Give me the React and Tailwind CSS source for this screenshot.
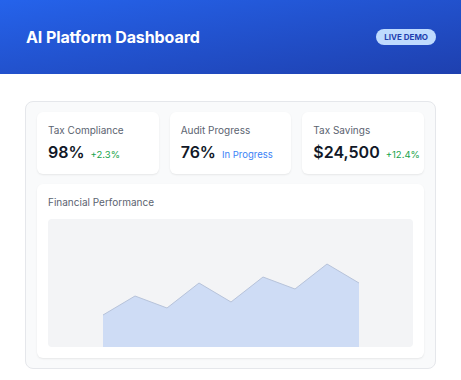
export default function App() {
  const pts = [
    [55, 96], [87, 77], [119, 89], [151, 64], [183, 83], [215, 58], [247, 70], [279, 45], [311, 64],
  ];
  const line = pts.map((p) => p.join(",")).join(" ");
  const poly = `55,128 ${line} 311,128`;
  return (
    <div className="w-[461px] h-[380px] bg-white" style={{ fontFamily: "Inter, 'Noto Sans', sans-serif" }}>
      <div className="h-[74px] bg-gradient-to-br from-[#2563eb] to-[#1e40af] flex items-center justify-between pl-[26px] pr-[25px]">
        <h1 className="text-white font-bold text-[16px] tracking-[-0.1px]">AI Platform Dashboard</h1>
        <span className="bg-[#bfdbfe] text-[#1e40af] text-[8px] font-bold rounded-full px-[8px] h-[16px] flex items-center leading-none">LIVE DEMO</span>
      </div>
      <div className="mx-[25px] mt-[27px] bg-[#f9fafb] border border-[#e5e7eb] rounded-lg px-[11px] pt-[10px] pb-[10px]">
        <div className="grid grid-cols-3 gap-[11px]">
          <Card label="Tax Compliance" value="98%" sub="+2.3%" subClass="text-[#16a34a]" />
          <Card label="Audit Progress" value="76%" sub="In Progress" subClass="text-[#3b82f6]" />
          <Card label="Tax Savings" value="$24,500" sub="+12.4%" subClass="text-[#16a34a]" />
        </div>
        <div className="mt-[10px] bg-white rounded-md shadow-[0_1px_2px_rgba(0,0,0,0.08)] px-[11px] pt-[11px] pb-[11px]">
          <div className="text-[10px] text-[#5b6370] leading-[14px]">Financial Performance</div>
          <div className="mt-[10px] h-[128px] bg-[#f3f4f6] rounded">
            <svg width="366" height="128" viewBox="0 0 366 128" className="block">
              <polygon points={poly} fill="#cedcf5" />
              <polyline points={line} fill="none" stroke="#b7c3da" strokeWidth="1" />
            </svg>
          </div>
        </div>
      </div>
    </div>
  );
}

function Card({ label, value, sub, subClass }) {
  return (
    <div className="bg-white rounded-md shadow-[0_1px_2px_rgba(0,0,0,0.08)] h-[62px] px-[11px] pt-[11px]">
      <div className="text-[10px] text-[#5b6370] leading-[14px]">{label}</div>
      <div className="flex items-baseline gap-[6px] mt-[4px]">
        <span className="text-[16px] font-semibold text-[#111827] leading-[22px]">{value}</span>
        <span className={`text-[9.5px] ${subClass}`}>{sub}</span>
      </div>
    </div>
  );
}
